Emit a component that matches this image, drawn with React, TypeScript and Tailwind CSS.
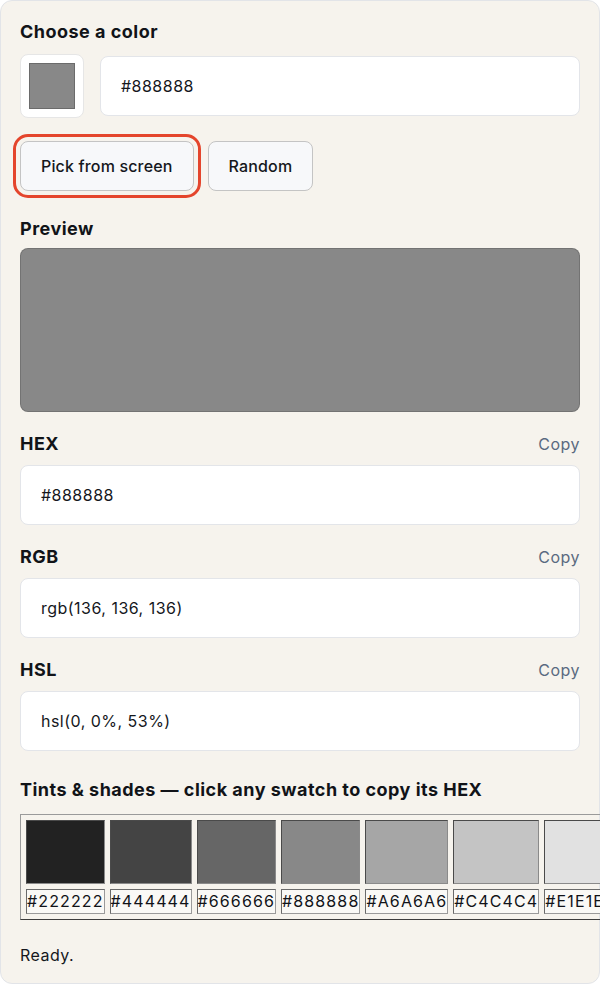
const shades = ["#222222", "#444444", "#666666", "#888888", "#A6A6A6", "#C4C4C4", "#E1E1E1"];

const Field = ({ label, value }: { label: string; value: string }) => (
  <div className="mt-5">
    <div className="flex items-center justify-between h-6">
      <span className="text-lg font-bold text-[#111318]">{label}</span>
      <span className="text-base text-[#5a6a80]">Copy</span>
    </div>
    <div className="mt-[9px] h-[60px] rounded-lg border border-[#e3e5e9] bg-white px-5 flex items-center text-base text-[#15171c]">
      {value}
    </div>
  </div>
);

export default function App() {
  return (
    <div className="w-[600px] h-[984px] overflow-hidden tracking-[0.03em]" style={{ fontFamily: "Inter, 'Noto Sans', sans-serif" }}>
      <div className="h-[984px] rounded-xl border border-[#e2e4e8] bg-[#f6f3ed] p-[19px] text-[#15171c]">
        <h2 className="text-lg font-bold leading-6 text-[#111318]">Choose a color</h2>

        <div className="mt-[10px] flex items-center gap-4">
          <div className="h-16 w-16 shrink-0 rounded-lg border border-[#e6e6e6] bg-white p-2">
            <div className="h-full w-full border border-[#6b6b6b] bg-[#888888]" />
          </div>
          <div className="h-[60px] flex-1 rounded-lg border border-[#e3e5e9] bg-white px-5 flex items-center text-base">
            #888888
          </div>
        </div>

        <div className="mt-[23px] flex gap-[14px]">
          <button className="h-[50px] rounded-lg border border-[#c4c4c4] bg-[#f7f8fa] px-5 text-base font-medium tracking-[0.01em] text-[#15171c] outline-3 outline-offset-[4px] outline-[#e4452c]">
            Pick from screen
          </button>
          <button className="h-[50px] rounded-lg border border-[#c4c4c4] bg-[#f7f8fa] px-5 text-base font-medium tracking-[0.01em] text-[#15171c]">
            Random
          </button>
        </div>

        <div className="mt-6 h-6 text-lg font-bold text-[#111318]">Preview</div>
        <div className="mt-[9px] h-[164px] rounded-lg border border-black/15 bg-[#888888]" />

        <Field label="HEX" value="#888888" />
        <Field label="RGB" value="rgb(136, 136, 136)" />
        <Field label="HSL" value="hsl(0, 0%, 53%)" />

        <div className="mt-[25px] h-6 text-lg font-bold text-[#111318] whitespace-nowrap">
          Tints &amp; shades — click any swatch to copy its HEX
        </div>

        <table className="mt-[14px] border-separate border-spacing-[5px] border border-t-[#9a9a9a] border-l-[#9a9a9a] border-b-[#3c3c3c] border-r-[#3c3c3c]">
          <tbody>
            <tr>
              {shades.map((c) => (
                <td key={c} className="p-0 align-top">
                  <div
                    className="h-16 w-full border border-t-[#4a4a4a] border-l-[#4a4a4a] border-b-[#8a8a8a] border-r-[#8a8a8a]"
                    style={{ backgroundColor: c }}
                  />
                  <div className="mt-[5px] border border-t-[#6a6a6a] border-l-[#6a6a6a] border-b-[#9a9a9a] border-r-[#9a9a9a] bg-[#faf9f6] text-base leading-[23px] tracking-[0.07em] whitespace-nowrap text-[#111318]">
                    {c}
                  </div>
                </td>
              ))}
            </tr>
          </tbody>
        </table>

        <div className="mt-[23px] h-6 text-base leading-6">Ready.</div>
      </div>
    </div>
  );
}
